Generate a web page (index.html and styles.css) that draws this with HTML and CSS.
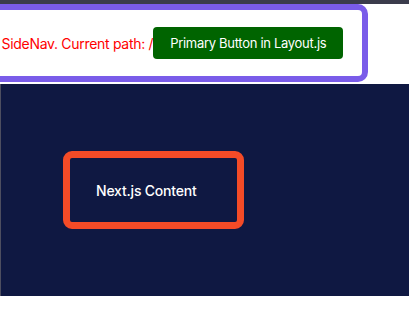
FILE: index.html
```html
<!DOCTYPE html>
<html lang="en">
<head>
<meta charset="utf-8">
<title>Layout</title>
<link rel="stylesheet" href="styles.css">
</head>
<body>
<div class="topbar"></div>
<header class="sidenav">
  <span class="path">SideNav. Current path: /</span>
  <button class="primary">Primary Button in Layout.js</button>
</header>
<main class="main">
  <div class="content">Next.js Content</div>
</main>
</body>
</html>
```

FILE: styles.css
```css
html, body {
  margin: 0;
  padding: 0;
  background: #ffffff;
  font-family: Inter, "Liberation Sans", Arial, sans-serif;
  overflow: hidden;
}

.topbar {
  height: 4px;
  background: #3b3c4c;
}

.sidenav {
  box-sizing: border-box;
  display: flex;
  align-items: center;
  width: 390px;
  height: 78px;
  margin-left: -22px;
  margin-bottom: 2px;
  padding-left: 17.5px;
  border: 6px solid #7a5ce9;
  border-radius: 10px;
  background: #ffffff;
}

.path {
  color: #ff0000;
  font-size: 14px;
  letter-spacing: -0.3px;
  white-space: nowrap;
}

.primary {
  box-sizing: border-box;
  width: 190px;
  height: 32px;
  padding: 0;
  border: none;
  border-radius: 4px;
  background: #006400;
  color: #ffffff;
  font-family: inherit;
  font-size: 13px;
  letter-spacing: -0.3px;
  white-space: nowrap;
}

.main {
  box-sizing: border-box;
  height: 212px;
  padding: 67px 0 0 62px;
  background: #0f1842;
  border-left: 1px solid #4d4e60;
}

.content {
  box-sizing: border-box;
  display: flex;
  align-items: center;
  width: 181px;
  height: 78px;
  padding-left: 26px;
  border: 7px solid #f44b27;
  border-radius: 9px;
  color: #ffffff;
  font-size: 14px;
  font-weight: 500;
  letter-spacing: -0.2px;
}
```
